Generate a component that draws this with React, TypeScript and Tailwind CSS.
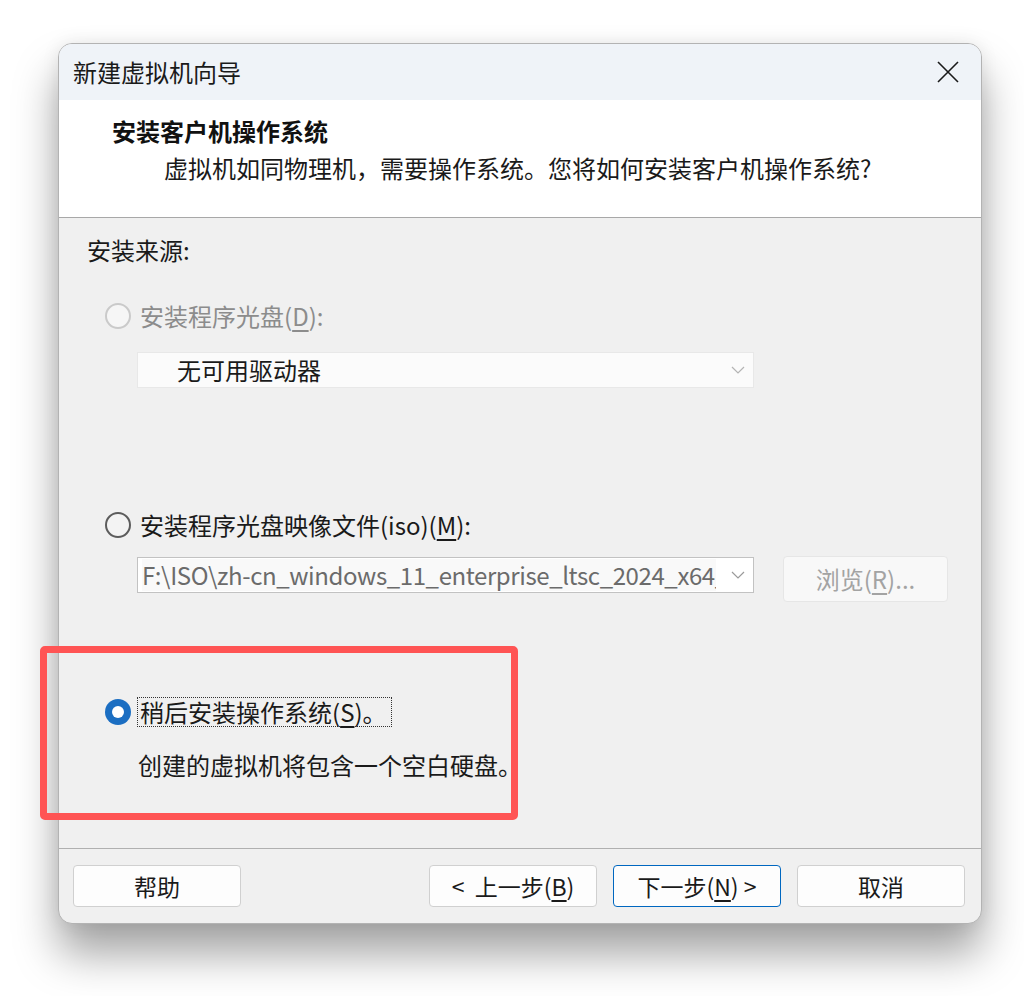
import React from "react";

const font = { fontFamily: '"Noto Sans CJK SC", "Noto Sans", sans-serif' };

function Radio({ state }: { state: "disabled" | "off" | "on" }) {
  if (state === "on") {
    return (
      <span className="flex h-[26px] w-[26px] shrink-0 items-center justify-center rounded-full bg-[#1b6ec2]">
        <span className="h-[12px] w-[12px] rounded-full bg-white" />
      </span>
    );
  }
  return (
    <span
      className={
        state === "disabled"
          ? "h-[26px] w-[26px] shrink-0 rounded-full border-2 border-[#cacaca] bg-[#f6f6f6]"
          : "h-[26px] w-[26px] shrink-0 rounded-full border-2 border-[#5c5c5c] bg-[#f3f3f3]"
      }
    />
  );
}

function Chevron({ color }: { color: string }) {
  return (
    <svg width="14" height="8" viewBox="0 0 14 8" fill="none">
      <path d="M1 1l6 6 6-6" stroke={color} strokeWidth="1.2" />
    </svg>
  );
}

function Button({
  children,
  primary,
}: {
  children: React.ReactNode;
  primary?: boolean;
}) {
  return (
    <button
      type="button"
      className={
        primary
          ? "flex h-[42px] w-[168px] items-center justify-center rounded-[4px] border border-[#0067c0] bg-[#fdfdfd] text-[23px] text-[#1a1a1a]"
          : "flex h-[42px] w-[168px] items-center justify-center rounded-[4px] border border-[#d0d0d0] bg-[#fdfdfd] text-[23px] text-[#1a1a1a]"
      }
    >
      {children}
    </button>
  );
}

export default function App() {
  return (
    <div
      className="relative h-[996px] w-[1024px] overflow-hidden bg-white pl-[58px] pt-[43px]"
      style={font}
    >
      <div className="flex h-[881px] w-[924px] flex-col overflow-hidden rounded-[14px] border border-[#b3b3b3] bg-[#f0f0f0] shadow-[0_30px_44px_rgba(0,0,0,0.36),0_0_18px_rgba(0,0,0,0.08)]">
        {/* title bar */}
        <div className="flex h-[56px] shrink-0 items-center justify-between bg-[#eff3f8] pl-[14px] pr-[22px]">
          <span className="text-[24px] leading-[32px] text-[#1a1a1a]">
            新建虚拟机向导
          </span>
          <svg width="22" height="22" viewBox="0 0 22 22" fill="none">
            <path d="M1 1l20 20M21 1L1 21" stroke="#1a1a1a" strokeWidth="1.6" />
          </svg>
        </div>

        {/* header */}
        <div className="flex h-[118px] shrink-0 flex-col gap-[5px] border-b border-[#a8a8a8] bg-white pt-[15px]">
          <div className="pl-[53px] text-[24px] font-bold leading-[32px] text-[#111]">
            安装客户机操作系统
          </div>
          <div className="pl-[105px] text-[24px] leading-[32px] text-[#1a1a1a]">
            虚拟机如同物理机，需要操作系统。您将如何安装客户机操作系统?
          </div>
        </div>

        {/* body */}
        <div className="flex flex-1 flex-col pl-[28px] pt-[16px] text-[24px] leading-[32px] text-[#1a1a1a]">
          <div>安装来源:</div>

          <div className="mt-[34px] flex items-center gap-[9px] pl-[18px] text-[#8c8c8c]">
            <Radio state="disabled" />
            <span>
              安装程序光盘(<span className="underline underline-offset-4">D</span>):
            </span>
          </div>

          <div className="ml-[50px] mt-[20px] flex h-[36px] w-[617px] items-center justify-between border border-[#e8e8e8] bg-[#fbfbfb] pl-[39px] pr-[8px]">
            <span>无可用驱动器</span>
            <Chevron color="#b4b4b4" />
          </div>

          <div className="mt-[121px] flex items-center gap-[9px] pl-[18px]">
            <Radio state="off" />
            <span>
              安装程序光盘映像文件(iso)(
              <span className="underline underline-offset-4">M</span>):
            </span>
          </div>

          <div className="ml-[50px] mt-[15px] flex items-start gap-[29px]">
            <div className="mt-[1px] flex h-[36px] w-[617px] items-center border border-[#c2c2c2] bg-white pl-[4px] pr-[8px]">
              <div className="w-[574px] overflow-hidden whitespace-nowrap bg-[#f9f9f9] tracking-[-0.4px] text-[#6b6b6b]">
                F:\ISO\zh-cn_windows_11_enterprise_ltsc_2024_x64_dvd.iso
              </div>
              <div className="ml-auto">
                <Chevron color="#9a9a9a" />
              </div>
            </div>
            <div className="flex h-[46px] w-[165px] items-center justify-center rounded-[4px] border border-[#e6e6e6] bg-[#f8f8f8] text-[#a3a3a3]">
              浏览(<span className="underline underline-offset-4">R</span>)...
            </div>
          </div>

          <div className="mt-[95px] flex items-center gap-[6px] pl-[18px]">
            <Radio state="on" />
            <span className="border border-dotted border-[#333] pl-[2px] pr-[4px] leading-[28px]">
              稍后安装操作系统(<span className="underline underline-offset-4">S</span>)。
            </span>
          </div>

          <div className="mt-[22px] pl-[51px]">创建的虚拟机将包含一个空白硬盘。</div>

          <div className="flex-1" />
        </div>

        {/* footer */}
        <div className="flex h-[75px] shrink-0 items-start border-t border-[#b0b0b0] pl-[14px] pr-[16px] pt-[16px]">
          <Button>帮助</Button>
          <div className="ml-auto flex gap-[16px]">
            <Button>
              &lt;&nbsp; 上一步(<span className="underline underline-offset-4">B</span>)
            </Button>
            <Button primary>
              下一步(<span className="underline underline-offset-4">N</span>) &gt;
            </Button>
            <Button>取消</Button>
          </div>
        </div>
      </div>

      {/* annotation box */}
      <div className="pointer-events-none absolute left-[40px] top-[646px] h-[174px] w-[478px] rounded-[5px] border-[7px] border-[#ff5454]" />
    </div>
  );
}
